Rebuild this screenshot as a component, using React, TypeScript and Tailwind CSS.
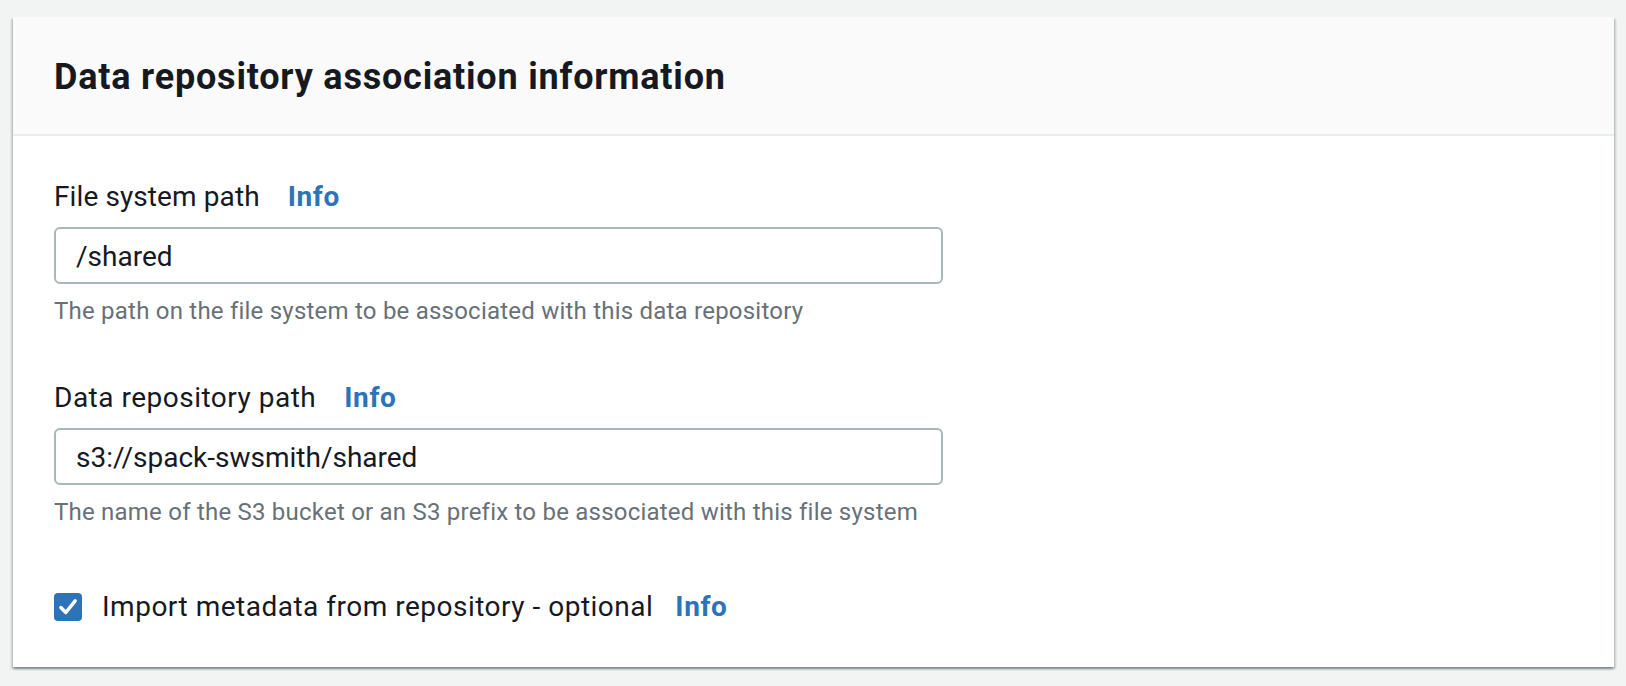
import React from "react";

const font = { fontFamily: "Roboto, 'Liberation Sans', sans-serif" };

function InfoLink({ className = "" }: { className?: string }) {
  return (
    <span className={`font-bold tracking-[0.6px] text-[#2e72b8] ${className}`}>Info</span>
  );
}

function Field({
  label,
  value,
  desc,
  labelClass,
}: {
  label: string;
  value: string;
  desc: string;
  labelClass: string;
}) {
  return (
    <div className="flex flex-col">
      <div className="flex items-center h-[44px] leading-[44px] text-[28px] text-[#16191f]">
        <span className={labelClass}>{label}</span>
        <InfoLink className="ml-[28px]" />
      </div>
      <div className="mt-[8px] h-[57px] w-[889px] rounded-[6px] border-2 border-[#aab7b8] bg-white flex items-center pl-[20px] pt-[3px] text-[28px] leading-[44px] text-[#16191f]">
        {value}
      </div>
      <div className="mt-[11px] h-[32px] leading-[32px] text-[24px] tracking-[0.22px] text-[#687078]">
        {desc}
      </div>
    </div>
  );
}

export default function App() {
  return (
    <div
      className="min-h-[686px] w-full bg-[#f2f3f3] pt-[17px] pl-[13px] pr-[12px]"
      style={font}
    >
      <div className="bg-white shadow-[0_2px_2px_0_rgba(0,28,36,0.3),2px_2px_2px_0_rgba(0,28,36,0.15),-2px_2px_2px_0_rgba(0,28,36,0.15)]">
        <div className="bg-[#fafafa] border-b-2 border-[#eaeded] pt-[38px] pb-[35px] pl-[41px]">
          <h2 className="h-[44px] leading-[44px] text-[36px] font-bold tracking-[0.8px] text-[#16191f]">
            Data repository association information
          </h2>
        </div>
        <div className="pt-[39px] pb-[38px] pl-[41px] flex flex-col">
          <Field
            label="File system path"
            value="/shared"
            desc="The path on the file system to be associated with this data repository"
            labelClass="tracking-[0.1px]"
          />
          <div className="mt-[49px]">
            <Field
              label="Data repository path"
              value="s3://spack-swsmith/shared"
              desc="The name of the S3 bucket or an S3 prefix to be associated with this file system"
              labelClass="tracking-[0.5px]"
            />
          </div>
          <div className="mt-[57px] flex items-center h-[44px]">
            <div className="w-[28px] h-[28px] rounded-[4px] bg-[#2e72b8] flex items-center justify-center">
              <svg width="22" height="22" viewBox="0 0 20 20" fill="none">
                <path
                  d="M3.5 10.5 L8 15 L16.5 4.5"
                  stroke="white"
                  strokeWidth="3.2"
                  strokeLinecap="round"
                  strokeLinejoin="round"
                />
              </svg>
            </div>
            <span className="ml-[20px] text-[28px] leading-[44px] tracking-[0.5px] text-[#16191f]">
              Import metadata from repository - optional
            </span>
            <InfoLink className="ml-[22px] text-[28px] leading-[44px]" />
          </div>
        </div>
      </div>
    </div>
  );
}
